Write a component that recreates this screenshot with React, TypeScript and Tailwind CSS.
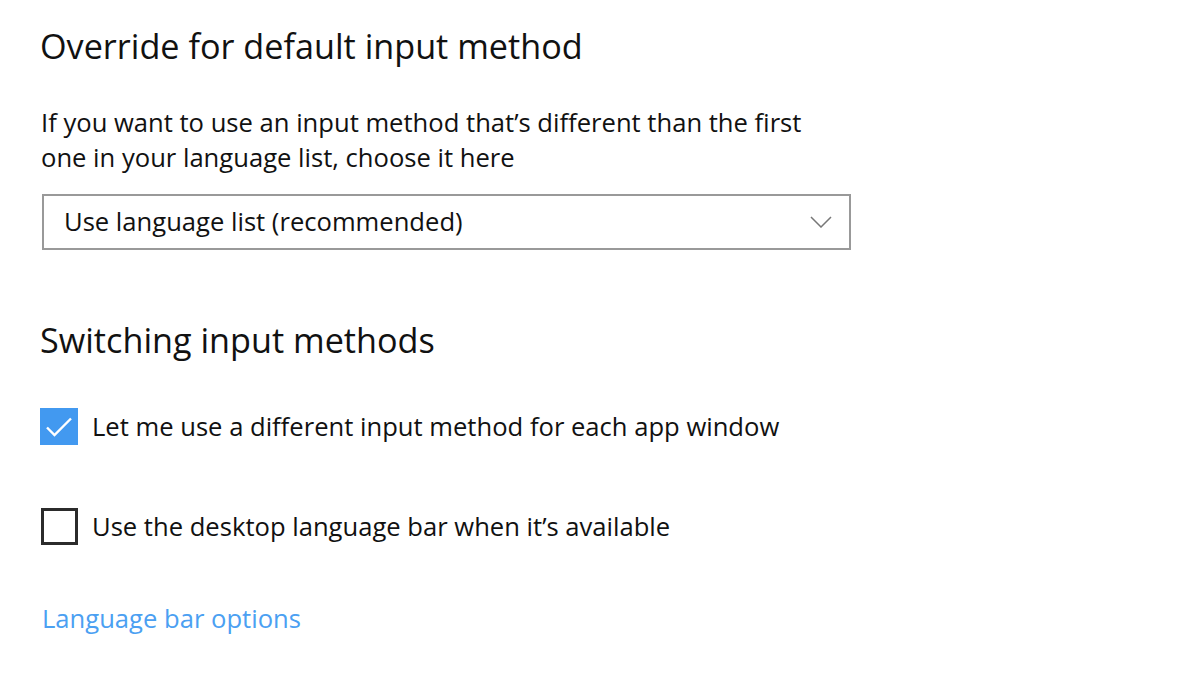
import React, { useState } from 'react';

function CheckRow({ checked, label, onToggle }: { checked: boolean; label: string; onToggle: () => void }) {
    return (
        <button onClick={onToggle} className="flex items-center gap-[14px] text-left">
            {checked ? (
                <span className="w-[38px] h-[37px] bg-[#4299f0] flex items-center justify-center shrink-0">
                    <svg width="28" height="22" viewBox="0 0 28 22" fill="none">
                        <path d="M2 11.5 L9.5 19 L26 2.5" stroke="white" strokeWidth="2.4" />
                    </svg>
                </span>
            ) : (
                <span className="ml-[1px] w-[37px] h-[37px] border-[3px] border-[#2b2b2b] bg-white shrink-0"></span>
            )}
            <span className="text-[25.6px] leading-[37px] text-[#111]">{label}</span>
        </button>
    );
}

export default function App() {
    const [perApp, setPerApp] = useState(true);
    const [langBar, setLangBar] = useState(false);

    return (
        <div className="w-[1200px] h-[675px] bg-white overflow-hidden pl-[40px] pt-[26px]" style={{ fontFamily: '"Open Sans", "Noto Sans", sans-serif' }}>
            <h1 className="text-[34.2px] leading-[40px] text-[#111]">Override for default input method</h1>

            <p className="mt-[39px] pl-[1px] text-[25.6px] leading-[35px] text-[#111]">
                If you want to use an input method that’s different than the first<br />
                one in your language list, choose it here
            </p>

            <div className="mt-[19px] ml-[2px] w-[809px] h-[56px] border-2 border-[#999] flex items-center justify-between pl-[20px] pr-[17px]">
                <span className="text-[25.6px] text-[#111]">Use language list (recommended)</span>
                <svg width="22" height="12" viewBox="0 0 22 12" fill="none">
                    <path d="M1 1 L11 11 L21 1" stroke="#777" strokeWidth="1.5" />
                </svg>
            </div>

            <h2 className="mt-[70px] text-[34.2px] leading-[40px] text-[#111]">Switching input methods</h2>

            <div className="mt-[48px]">
                <CheckRow checked={perApp} label="Let me use a different input method for each app window" onToggle={() => setPerApp(!perApp)} />
            </div>
            <div className="mt-[63px]">
                <CheckRow checked={langBar} label="Use the desktop language bar when it’s available" onToggle={() => setLangBar(!langBar)} />
            </div>

            <a href="#" className="block mt-[56px] pl-[2px] text-[25.6px] leading-[35px] text-[#4ba0f2]">Language bar options</a>
        </div>
    );
}
